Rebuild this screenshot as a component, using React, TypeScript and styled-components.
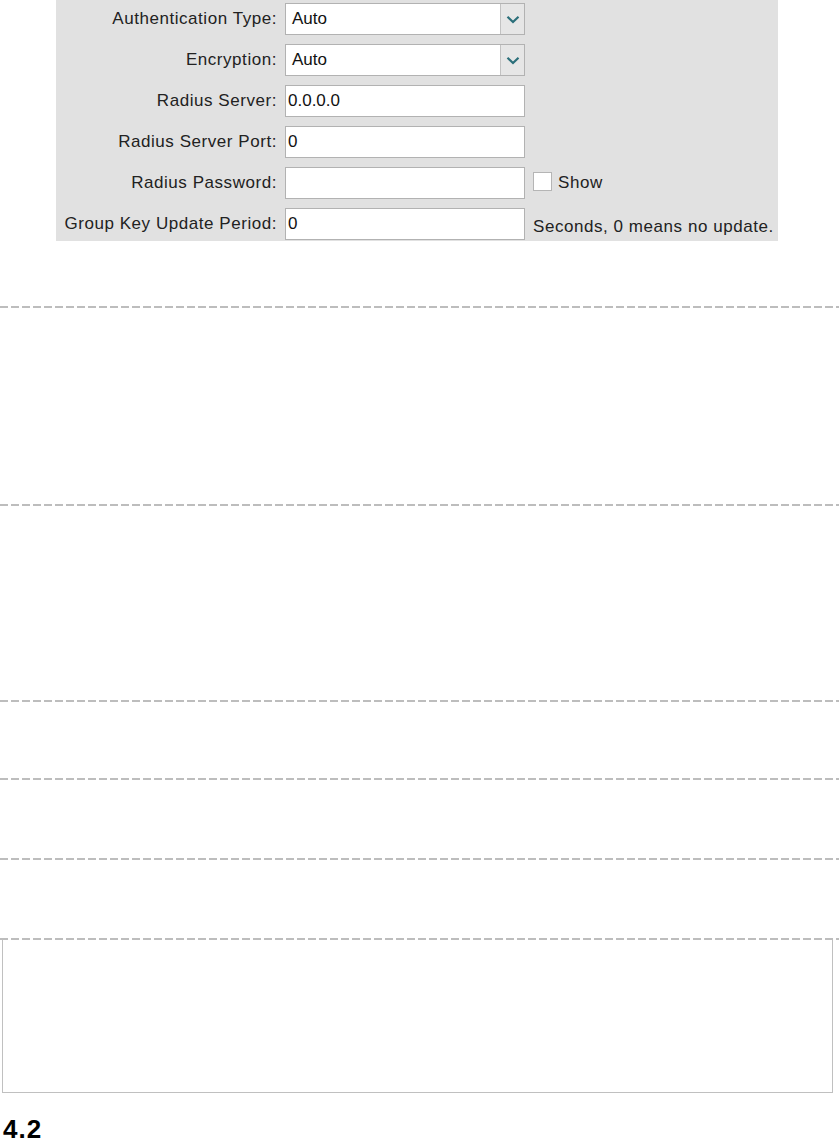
import React from "react";
import styled, { createGlobalStyle } from "styled-components";

const GlobalStyle = createGlobalStyle`
	html, body {
		margin: 0;
		padding: 0;
		background: #ffffff;
	}
	body {
		font-family: "Liberation Sans", Arial, sans-serif;
		width: 839px;
		overflow: hidden;
	}
`;

type Row = {
	label: string;
	kind: "select" | "input";
	value: string;
	extra?: "show" | "hint";
};

const rows: Row[] = [
	{ label: "Authentication Type:", kind: "select", value: "Auto" },
	{ label: "Encryption:", kind: "select", value: "Auto" },
	{ label: "Radius Server:", kind: "input", value: "0.0.0.0" },
	{ label: "Radius Server Port:", kind: "input", value: "0" },
	{ label: "Radius Password:", kind: "input", value: "", extra: "show" },
	{
		label: "Group Key Update Period:",
		kind: "input",
		value: "0",
		extra: "hint",
	},
];

// gaps above each dashed separator, in px
const dividerGaps = [65, 196, 194, 76, 78, 78];

const Chevron = () => (
	<svg width="14" height="9" viewBox="0 0 14 9">
		<path
			d="M1.5 1.8 L7 7 L12.5 1.8"
			fill="none"
			stroke="#2b6f7a"
			strokeWidth="2.2"
		/>
	</svg>
);

const App: React.FC = () => {
	return (
		<>
			<GlobalStyle />
			<Page>
				<SettingsPanel>
					{rows.map((row) => (
						<FormRow key={row.label}>
							<Label>{row.label}</Label>
							{row.kind === "select" ? (
								<SelectBox>
									<SelectValue>{row.value}</SelectValue>
									<ArrowButton>
										<Chevron />
									</ArrowButton>
								</SelectBox>
							) : (
								<TextBox>{row.value}</TextBox>
							)}
							{row.extra === "show" && (
								<CheckWrap>
									<CheckSquare />
									<Note>Show</Note>
								</CheckWrap>
							)}
							{row.extra === "hint" && (
								<HintNote>Seconds, 0 means no update.</HintNote>
							)}
						</FormRow>
					))}
				</SettingsPanel>
				{dividerGaps.map((gap, i) => (
					<Divider key={i} $gap={gap} />
				))}
				<EmptyBox />
				<Heading>4.2</Heading>
			</Page>
		</>
	);
};
export default App;

const Page = styled.div`
	width: 839px;
	height: 1148px;
	display: flex;
	flex-direction: column;
`;

const SettingsPanel = styled.div`
	margin-left: 56px;
	width: 722px;
	background: #e1e1e1;
	padding: 3px 0 1px;
	display: flex;
	flex-direction: column;
	row-gap: 9px;
`;

const FormRow = styled.div`
	display: grid;
	grid-template-columns: 221px 240px auto;
	column-gap: 8px;
	align-items: center;
	height: 32px;
`;

const Label = styled.div`
	text-align: right;
	font-size: 17px;
	letter-spacing: 0.55px;
	color: #222;
	white-space: nowrap;
`;

const SelectBox = styled.div`
	box-sizing: border-box;
	height: 32px;
	border: 1px solid #b2b2b2;
	background: #ffffff;
	display: grid;
	grid-template-columns: 1fr 24px;
`;

const SelectValue = styled.div`
	padding-left: 6px;
	display: flex;
	align-items: center;
	font-size: 17px;
	color: #111;
`;

const ArrowButton = styled.div`
	background: #e6e6e6;
	border-left: 1px solid #c2c2c2;
	display: flex;
	align-items: center;
	justify-content: center;
`;

const TextBox = styled.div`
	box-sizing: border-box;
	height: 32px;
	border: 1px solid #b2b2b2;
	background: #ffffff;
	padding-left: 2px;
	display: flex;
	align-items: center;
	font-size: 17px;
	color: #111;
`;

const CheckWrap = styled.div`
	display: flex;
	align-items: center;
	column-gap: 6px;
`;

const CheckSquare = styled.div`
	box-sizing: border-box;
	width: 19px;
	height: 19px;
	margin-top: -3px;
	border: 1px solid #b5b5b5;
	background: #ffffff;
`;

const Note = styled.span`
	font-size: 17px;
	letter-spacing: 0.55px;
	color: #222;
`;

const HintNote = styled(Note)`
	padding-top: 5px;
	white-space: nowrap;
`;

const Divider = styled.div<{ $gap: number }>`
	margin-top: ${(p) => p.$gap}px;
	height: 2px;
	width: 839px;
	background: repeating-linear-gradient(
		to right,
		#bdbdbd 0 8px,
		transparent 8px 11px
	);
`;

const EmptyBox = styled.div`
	margin-left: 2px;
	width: 831px;
	height: 153px;
	box-sizing: border-box;
	border: 1px solid #c0c0c0;
	border-top: none;
`;

const Heading = styled.h2`
	margin: 21px 0 0 3px;
	font-size: 26px;
	letter-spacing: 1px;
	font-weight: bold;
	color: #000;
`;
